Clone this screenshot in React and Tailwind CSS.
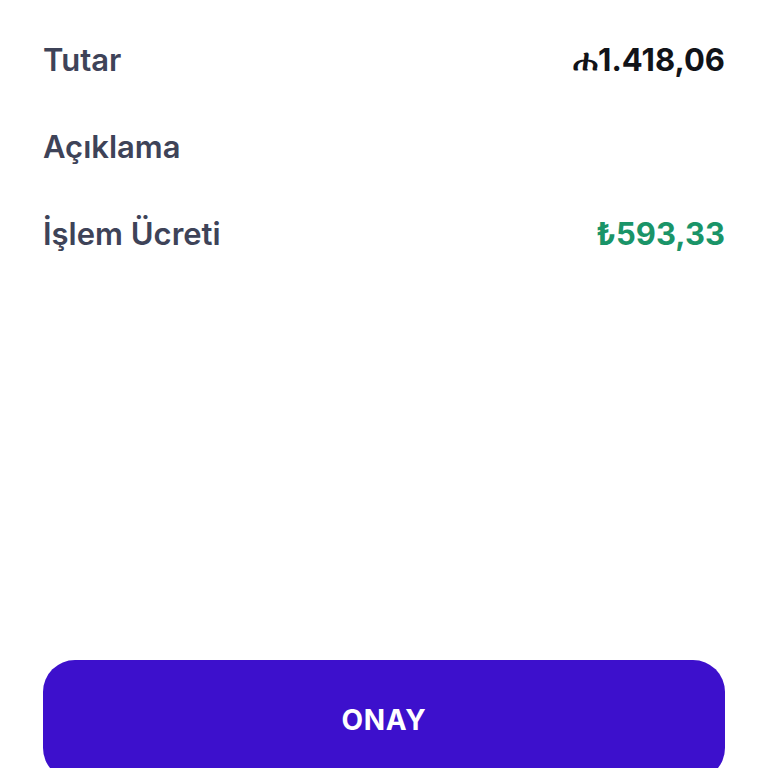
import React from 'react';

const Row = ({ label, value, valueClass }) => (
  <div className="flex items-center justify-between h-[87px]">
    <span className="text-[31px] font-semibold text-[#3e4358]">{label}</span>
    {value && <span className={`text-[31px] font-bold ${valueClass}`}>{value}</span>}
  </div>
);

export default function App() {
  return (
    <div className="w-[768px] h-[768px] overflow-hidden bg-white px-[43px] pt-[17px] flex flex-col" style={{ fontFamily: 'Inter, "Noto Sans", sans-serif' }}>
      <Row label="Tutar" value="ሐ1.418,06" valueClass="text-[#111318]" />
      <Row label="Açıklama" />
      <Row label="İşlem Ücreti" value="₺593,33" valueClass="text-[#1a9468]" />
      <div className="flex-1" />
      <button className="shrink-0 h-[120px] -mb-[12px] w-full rounded-[32px] bg-[#3d10cc] text-white text-[28px] font-bold tracking-wide">
        ONAY
      </button>
    </div>
  );
}
